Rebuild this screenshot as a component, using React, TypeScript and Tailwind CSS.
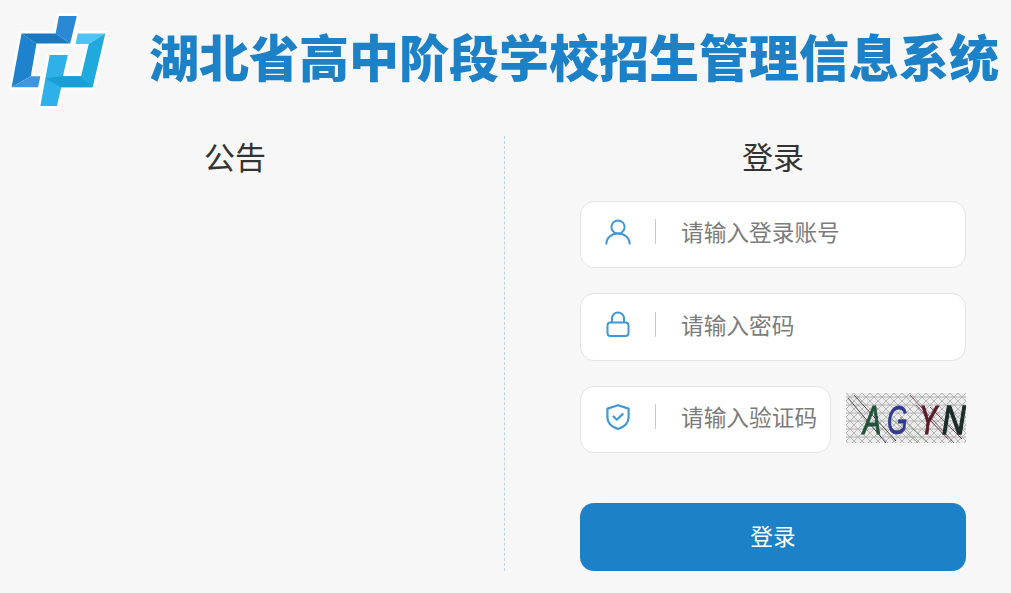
import React from "react";

const FONT = "font-['Noto_Sans_CJK_SC','Liberation_Sans',sans-serif]";

const Logo = () => (
  <svg viewBox="0 0 450 360" className="w-[149px] h-[120px] shrink-0 blur-[0.4px]">
    <g fill="#fff" stroke="#fff" strokeWidth="16" strokeLinejoin="round">
      <polygon points="178,50 232,50 212,133 115,133 93,232 122,232 115,265 35,265 65,103 168,103" />
      <polygon points="235,103 318,103 280,265 185,265 172,322 122,322 150,168 205,168 190,232 245,232 268,135 228,135" />
    </g>
    {/* left piece */}
    <polygon points="65,103 110,133 93,232 35,265" fill="#1e82cc" />
    <polygon points="65,103 168,103 212,133 110,133" fill="#1a78c0" />
    <polygon points="178,50 232,50 212,133 168,103" fill="#2a88d4" />
    <polygon points="35,265 93,232 122,232 115,265" fill="#3d96de" />
    {/* right piece */}
    <polygon points="235,103 318,103 268,135 228,135" fill="#4fc3f2" />
    <polygon points="318,103 280,265 245,232 268,135" fill="#1fa9dc" />
    <polygon points="150,168 205,168 190,232 245,232 280,265 185,265 172,322 122,322" fill="#2db1e8" />
    <polygon points="136,238 190,232 245,232 280,265 185,265" fill="#179fd6" />
  </svg>
);

const UserIcon = () => (
  <svg viewBox="0 0 26 26" className="w-[26px] h-[26px]" fill="none" stroke="#4098d7" strokeWidth="2">
    <circle cx="13" cy="8" r="6.600" />
    <path d="M1.300 25.500c0-6.400 5-11 11.700-11s11.700 4.600 11.700 11" />
  </svg>
);

const LockIcon = () => (
  <svg viewBox="0 0 24 26" className="w-[24px] h-[26px]" fill="none" stroke="#4098d7" strokeWidth="2">
    <rect x="1.500" y="11.500" width="21" height="13.500" rx="3" />
    <path d="M6 11.500V7.500a6 6 0 0 1 12 0v4" />
  </svg>
);

const ShieldIcon = () => (
  <svg viewBox="0 0 24 26" className="w-[24px] h-[26px]" fill="none" stroke="#4098d7" strokeWidth="2.200" strokeLinejoin="round" strokeLinecap="round">
    <path d="M12 1.200 22.600 4.600v8.600c0 5.600-4.400 9.600-10.600 11.800C5.800 22.800 1.400 18.800 1.400 13.200V4.600z" />
    <path d="m7.500 12.500 3.300 3.200 5.800-5.600" />
  </svg>
);

const Captcha = () => (
  <svg viewBox="0 0 120 50" className="w-[120px] h-[50px] shrink-0 blur-[0.4px]">
    <defs>
      <pattern id="mesh" width="8" height="8" patternUnits="userSpaceOnUse">
        <rect width="8" height="8" fill="#ececec" />
        <path d="M0 0 8 8M8 0 0 8M0 4H8" stroke="#b0b0b0" strokeWidth="0.9" />
      </pattern>
    </defs>
    <rect width="120" height="50" fill="url(#mesh)" />
    <g fill="none" strokeWidth="0.9">
      <path d="M2 5 40 50M8 2 50 48" stroke="#333" />
      <path d="M64 2 108 50M70 12 102 46M84 14 116 46" stroke="#6f3f50" />
      <path d="M46 26 72 50M54 24 82 50" stroke="#7f9a6c" />
    </g>
    <g fontFamily="'Liberation Sans',sans-serif" fontSize="40" fontStyle="italic">
      <text transform="translate(17 41) scale(0.68 1)" fill="#23533a" stroke="#23533a" strokeWidth="1.200">A</text>
      <text transform="translate(41 41) scale(0.66 1)" fill="#2f3a8c" stroke="#2f3a8c" strokeWidth="0.800">G</text>
      <text transform="translate(73 41) scale(0.68 1)" fill="#5a1c28" stroke="#5a1c28" strokeWidth="1.200">Y</text>
      <text transform="translate(96 41) scale(0.82 1)" fill="#1c2c28" stroke="#1c2c28" strokeWidth="1.400">N</text>
    </g>
  </svg>
);

const Field = ({ icon, placeholder, className }: { icon: React.ReactNode; placeholder: string; className: string }) => (
  <div className={`flex items-center pb-[6px] bg-white border border-[#e4e4e4] rounded-[14px] ${className}`}>
    <div className="w-[75px] h-[25px] shrink-0 flex items-center justify-center border-r border-[#c9c9c9]">{icon}</div>
    <input
      readOnly
      placeholder={placeholder}
      className="flex-1 min-w-0 ml-[25px] mt-[2px] bg-transparent outline-none text-[22.7px] placeholder:text-[#7c7c7c]"
    />
  </div>
);

export default function App() {
  return (
    <div className={`w-[1011px] h-[593px] overflow-hidden bg-[#f7f7f7] ${FONT}`}>
      <header className="flex items-center h-[117px]">
        <Logo />
        <h1 className="mb-[8px] text-[50px] leading-none font-black text-[#1c81c6] whitespace-nowrap">湖北省高中阶段学校招生管理信息系统</h1>
      </header>
      <div className="flex mt-[19px] h-[435px]">
        <section className="w-[505px] shrink-0 border-r border-dashed border-[#b8d6ea] pr-[34px]">
          <h2 className="text-center text-[31px] leading-[40px] text-[#333]">公告</h2>
        </section>
        <section className="w-[461px] pl-[75px] flex flex-col">
          <h2 className="text-center text-[31px] leading-[40px] text-[#333]">登录</h2>
          <Field icon={<UserIcon />} placeholder="请输入登录账号" className="h-[67px] mt-[25px]" />
          <Field icon={<LockIcon />} placeholder="请输入密码" className="h-[68px] mt-[25px]" />
          <div className="flex items-start justify-between mt-[25px]">
            <Field icon={<ShieldIcon />} placeholder="请输入验证码" className="h-[67px] w-[251px]" />
            <div className="mt-[7px]">
              <Captcha />
            </div>
          </div>
          <button className="h-[68px] mt-[50px] pb-[2px] rounded-[14px] bg-[#1c81c6] text-white text-[22.7px]">登录</button>
        </section>
      </div>
    </div>
  );
}
